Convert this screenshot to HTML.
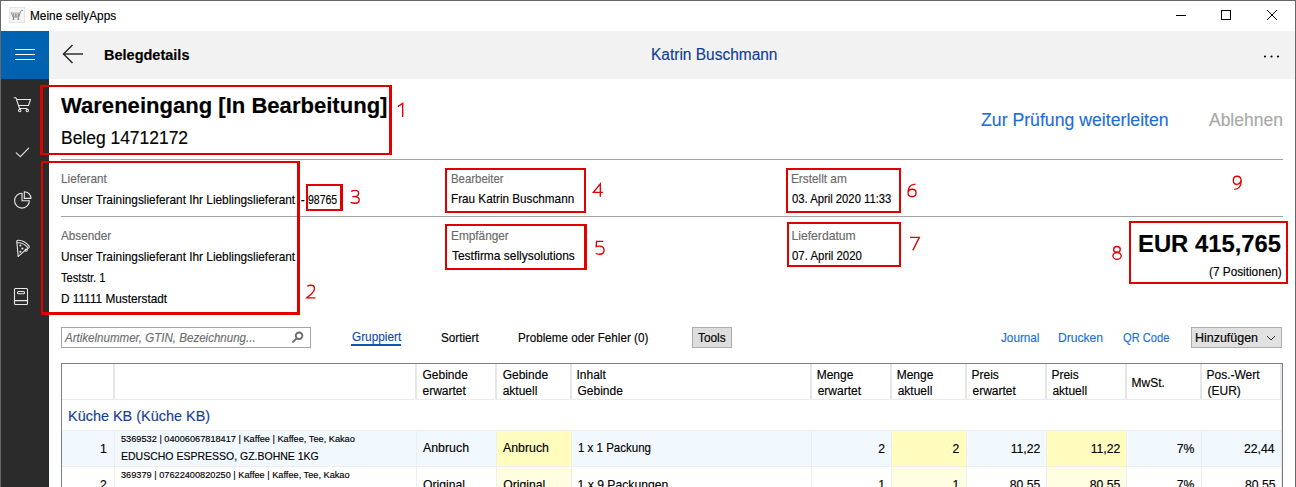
<!DOCTYPE html>
<html><head><meta charset="utf-8"><title>Belegdetails</title>
<style>
html,body{margin:0;padding:0;width:1296px;height:487px;overflow:hidden;background:#fff}
.a{position:absolute;box-sizing:border-box}
.t{position:absolute;white-space:nowrap;-webkit-text-stroke:0.15px currentColor}
</style></head><body>
<div class="a" style="left:0px;top:0px;width:1296px;height:487px;background:#ffffff;"></div><div class="a" style="left:1px;top:31px;width:48px;height:456px;background:#2b2b2b;"></div><div class="a" style="left:1px;top:31px;width:48px;height:48px;background:#0063b1;"></div><div class="a" style="left:15px;top:49px;width:20px;height:1px;background:#ffffff;"></div><div class="a" style="left:15px;top:54px;width:20px;height:1px;background:#ffffff;"></div><div class="a" style="left:15px;top:59px;width:20px;height:1px;background:#ffffff;"></div><div class="a" style="left:49px;top:31px;width:1246px;height:48px;background:#f2f2f2;"></div><div class="a" style="left:0px;top:0px;width:1296px;height:1px;background:#686868;"></div><div class="a" style="left:0px;top:0px;width:1px;height:487px;background:#686868;"></div><div class="a" style="left:1295px;top:0px;width:1px;height:487px;background:#686868;"></div><div class="a" style="left:61px;top:159px;width:1222px;height:1px;background:#a3a3a3;"></div><div class="a" style="left:61px;top:216px;width:1222px;height:1px;background:#a3a3a3;"></div><div class="a" style="left:61px;top:327px;width:250px;height:21px;box-shadow:inset 0 0 0 1px #a3a5aa;"></div><div class="a" style="left:351px;top:344px;width:50px;height:2px;background:#0a5ab4;"></div><div class="a" style="left:692px;top:327px;width:40px;height:21px;background:#dddddd;box-shadow:inset 0 0 0 1px #adadad;"></div><div class="a" style="left:1191px;top:327px;width:91px;height:21px;background:#e1e1e1;box-shadow:inset 0 0 0 1px #adadad;"></div><div class="a" style="left:61px;top:363px;width:1222px;height:1px;background:#7a7f87;"></div><div class="a" style="left:61px;top:363px;width:1px;height:124px;background:#7a7f87;"></div><div class="a" style="left:1282px;top:363px;width:1px;height:124px;background:#7a7f87;"></div><div class="a" style="left:62px;top:399px;width:1220px;height:1px;background:#ebebeb;"></div><div class="a" style="left:113px;top:364px;width:2px;height:35px;background:#e6e6e6;"></div><div class="a" style="left:415px;top:364px;width:2px;height:35px;background:#e6e6e6;"></div><div class="a" style="left:495px;top:364px;width:2px;height:35px;background:#e6e6e6;"></div><div class="a" style="left:570px;top:364px;width:2px;height:35px;background:#e6e6e6;"></div><div class="a" style="left:810px;top:364px;width:2px;height:35px;background:#e6e6e6;"></div><div class="a" style="left:890px;top:364px;width:2px;height:35px;background:#e6e6e6;"></div><div class="a" style="left:965px;top:364px;width:2px;height:35px;background:#e6e6e6;"></div><div class="a" style="left:1045px;top:364px;width:2px;height:35px;background:#e6e6e6;"></div><div class="a" style="left:1125px;top:364px;width:2px;height:35px;background:#e6e6e6;"></div><div class="a" style="left:1200px;top:364px;width:2px;height:35px;background:#e6e6e6;"></div><div class="a" style="left:1280px;top:364px;width:2px;height:35px;background:#e6e6e6;"></div><div class="a" style="left:62px;top:430px;width:1220px;height:1px;background:#eeeeee;"></div><div class="a" style="left:62px;top:431px;width:1220px;height:35px;background:#f2f9fe;"></div><div class="a" style="left:62px;top:466px;width:1220px;height:1px;background:#eeeeee;"></div><div class="a" style="left:497px;top:431px;width:74px;height:35px;background:#fffcbe;"></div><div class="a" style="left:497px;top:467px;width:74px;height:20px;background:#fffde1;"></div><div class="a" style="left:892px;top:431px;width:74px;height:35px;background:#fffcbe;"></div><div class="a" style="left:892px;top:467px;width:74px;height:20px;background:#fffde1;"></div><div class="a" style="left:1047px;top:431px;width:79px;height:35px;background:#fffcbe;"></div><div class="a" style="left:1047px;top:467px;width:79px;height:20px;background:#fffde1;"></div><div class="a" style="left:114px;top:430px;width:1px;height:57px;background:#eeeeee;"></div><div class="a" style="left:416px;top:430px;width:1px;height:57px;background:#eeeeee;"></div><div class="a" style="left:496px;top:430px;width:1px;height:57px;background:#eeeeee;"></div><div class="a" style="left:571px;top:430px;width:1px;height:57px;background:#eeeeee;"></div><div class="a" style="left:811px;top:430px;width:1px;height:57px;background:#eeeeee;"></div><div class="a" style="left:891px;top:430px;width:1px;height:57px;background:#eeeeee;"></div><div class="a" style="left:966px;top:430px;width:1px;height:57px;background:#eeeeee;"></div><div class="a" style="left:1046px;top:430px;width:1px;height:57px;background:#eeeeee;"></div><div class="a" style="left:1126px;top:430px;width:1px;height:57px;background:#eeeeee;"></div><div class="a" style="left:1201px;top:430px;width:1px;height:57px;background:#eeeeee;"></div><div class="a" style="left:1281px;top:364px;width:1px;height:123px;background:#e6e6e6;"></div><div class="a" style="left:40px;top:85px;width:352px;height:70px;border-style:solid;border-color:#e00000;border-width:2px 3px 2px 3px"></div><div class="a" style="left:41px;top:161px;width:259px;height:154px;border-style:solid;border-color:#e00000;border-width:2px 3px 3px 2px"></div><div class="a" style="left:306px;top:184px;width:37px;height:27px;border-style:solid;border-color:#e00000;border-width:2px 3px 2px 2px"></div><div class="a" style="left:445px;top:168px;width:141px;height:45px;border-style:solid;border-color:#e00000;border-width:2px 2px 2px 2px"></div><div class="a" style="left:786px;top:168px;width:115px;height:45px;border-style:solid;border-color:#e00000;border-width:2px 2px 2px 2px"></div><div class="a" style="left:445px;top:224px;width:142px;height:46px;border-style:solid;border-color:#e00000;border-width:2px 3px 2px 2px"></div><div class="a" style="left:787px;top:222px;width:114px;height:45px;border-style:solid;border-color:#e00000;border-width:2px 2px 2px 2px"></div><div class="a" style="left:1129px;top:221px;width:159px;height:63px;border-style:solid;border-color:#e00000;border-width:2px 2px 2px 2px"></div><div class="t" style="left:29.55px;top:10.22px;font:normal normal 12.5px/12.5px 'Liberation Sans', sans-serif;color:#000;transform:scaleX(0.9467);transform-origin:0 0;">Meine sellyApps</div><div class="t" style="left:103.62px;top:47.57px;font:normal bold 14.8px/14.8px 'Liberation Sans', sans-serif;color:#000;transform:scaleX(0.9802);transform-origin:0 0;">Belegdetails</div><div class="t" style="left:650.83px;top:46.56px;font:normal normal 16px/16px 'Liberation Sans', sans-serif;color:#0f3d96;transform:scaleX(0.9674);transform-origin:0 0;">Katrin Buschmann</div><div class="t" style="left:61.4px;top:96.1px;font:normal bold 21.5px/21.5px 'Liberation Sans', sans-serif;color:#000;transform:scaleX(1.0262);transform-origin:0 0;">Wareneingang [In Bearbeitung]</div><div class="t" style="left:61.3px;top:129.99px;font:normal normal 17.5px/17.5px 'Liberation Sans', sans-serif;color:#000;transform:scaleX(0.9968);transform-origin:0 0;">Beleg 14712172</div><div class="t" style="left:980.6px;top:112.1px;font:normal normal 17.6px/17.6px 'Liberation Sans', sans-serif;color:#1c6fd4;transform:scaleX(1.0048);transform-origin:0 0;">Zur Prüfung weiterleiten</div><div class="t" style="left:1208.5px;top:112.1px;font:normal normal 17.6px/17.6px 'Liberation Sans', sans-serif;color:#a8a8a8;transform:scaleX(0.9932);transform-origin:0 0;">Ablehnen</div><div class="t" style="left:60.53px;top:172.57px;font:normal normal 12.2px/12.2px 'Liberation Sans', sans-serif;color:#6a6a6a;transform:scaleX(0.966);transform-origin:0 0;">Lieferant</div><div class="t" style="left:60.53px;top:194.07px;font:normal normal 12.2px/12.2px 'Liberation Sans', sans-serif;color:#000;transform:scaleX(0.9708);transform-origin:0 0;">Unser Trainingslieferant Ihr Lieblingslieferant</div><div class="t" style="left:300.8px;top:194.07px;font:normal normal 12.2px/12.2px 'Liberation Sans', sans-serif;color:#000;">-</div><div class="t" style="left:308.4px;top:194.07px;font:normal normal 12.2px/12.2px 'Liberation Sans', sans-serif;color:#000;transform:scaleX(0.8588);transform-origin:0 0;">98765</div><div class="t" style="left:61.3px;top:229.77px;font:normal normal 12.2px/12.2px 'Liberation Sans', sans-serif;color:#6a6a6a;transform:scaleX(0.9596);transform-origin:0 0;">Absender</div><div class="t" style="left:60.53px;top:250.67px;font:normal normal 12.2px/12.2px 'Liberation Sans', sans-serif;color:#000;transform:scaleX(0.9708);transform-origin:0 0;">Unser Trainingslieferant Ihr Lieblingslieferant</div><div class="t" style="left:61.3px;top:271.67px;font:normal normal 12.2px/12.2px 'Liberation Sans', sans-serif;color:#000;transform:scaleX(0.9122);transform-origin:0 0;">Teststr. 1</div><div class="t" style="left:60.93px;top:293.27px;font:normal normal 12.2px/12.2px 'Liberation Sans', sans-serif;color:#000;transform:scaleX(0.9688);transform-origin:0 0;">D 11111 Musterstadt</div><div class="t" style="left:451.47px;top:172.77px;font:normal normal 12.2px/12.2px 'Liberation Sans', sans-serif;color:#6a6a6a;transform:scaleX(0.9348);transform-origin:0 0;">Bearbeiter</div><div class="t" style="left:451.44px;top:193.17px;font:normal normal 12.2px/12.2px 'Liberation Sans', sans-serif;color:#000;transform:scaleX(0.9622);transform-origin:0 0;">Frau Katrin Buschmann</div><div class="t" style="left:791.43px;top:172.77px;font:normal normal 12.2px/12.2px 'Liberation Sans', sans-serif;color:#6a6a6a;transform:scaleX(0.9679);transform-origin:0 0;">Erstellt am</div><div class="t" style="left:792.4px;top:193.17px;font:normal normal 12.2px/12.2px 'Liberation Sans', sans-serif;color:#000;transform:scaleX(0.9243);transform-origin:0 0;">03. April 2020 11:33</div><div class="t" style="left:451.43px;top:229.67px;font:normal normal 12.2px/12.2px 'Liberation Sans', sans-serif;color:#6a6a6a;transform:scaleX(0.9695);transform-origin:0 0;">Empfänger</div><div class="t" style="left:452.4px;top:250.27px;font:normal normal 12.2px/12.2px 'Liberation Sans', sans-serif;color:#000;transform:scaleX(0.98);transform-origin:0 0;">Testfirma sellysolutions</div><div class="t" style="left:791.4px;top:229.67px;font:normal normal 12.2px/12.2px 'Liberation Sans', sans-serif;color:#6a6a6a;">Lieferdatum</div><div class="t" style="left:792.4px;top:250.27px;font:normal normal 12.2px/12.2px 'Liberation Sans', sans-serif;color:#000;transform:scaleX(0.9378);transform-origin:0 0;">07. April 2020</div><div class="t" style="left:1137.96px;top:232.73px;font:normal bold 23px/23px 'Liberation Sans', sans-serif;color:#000;transform:scaleX(1.0358);transform-origin:0 0;">EUR 415,765</div><div class="t" style="left:1209.0px;top:266.37px;font:normal normal 12.2px/12.2px 'Liberation Sans', sans-serif;color:#000;transform:scaleX(0.968);transform-origin:0 0;">(7 Positionen)</div><div class="t" style="left:64.96px;top:331.84px;font:italic normal 12px/12px 'Liberation Sans', sans-serif;color:#6d6d6d;transform:scaleX(0.9626);transform-origin:0 0;">Artikelnummer, GTIN, Bezeichnung...</div><div class="t" style="left:351.5px;top:331.17px;font:normal normal 12.2px/12.2px 'Liberation Sans', sans-serif;color:#0f4fa8;transform:scaleX(0.9686);transform-origin:0 0;">Gruppiert</div><div class="t" style="left:440.54px;top:331.67px;font:normal normal 12.2px/12.2px 'Liberation Sans', sans-serif;color:#000;transform:scaleX(0.9615);transform-origin:0 0;">Sortiert</div><div class="t" style="left:518.04px;top:331.67px;font:normal normal 12.2px/12.2px 'Liberation Sans', sans-serif;color:#000;transform:scaleX(0.957);transform-origin:0 0;">Probleme oder Fehler (0)</div><div class="t" style="left:697.5px;top:331.67px;font:normal normal 12.2px/12.2px 'Liberation Sans', sans-serif;color:#000;transform:scaleX(0.9714);transform-origin:0 0;">Tools</div><div class="t" style="left:1000.6px;top:331.67px;font:normal normal 12.2px/12.2px 'Liberation Sans', sans-serif;color:#1c6fd4;transform:scaleX(0.9625);transform-origin:0 0;">Journal</div><div class="t" style="left:1058.21px;top:331.67px;font:normal normal 12.2px/12.2px 'Liberation Sans', sans-serif;color:#1c6fd4;transform:scaleX(0.9932);transform-origin:0 0;">Drucken</div><div class="t" style="left:1123.4px;top:331.67px;font:normal normal 12.2px/12.2px 'Liberation Sans', sans-serif;color:#1c6fd4;transform:scaleX(0.9118);transform-origin:0 0;">QR Code</div><div class="t" style="left:1195.18px;top:331.67px;font:normal normal 12.2px/12.2px 'Liberation Sans', sans-serif;color:#000;transform:scaleX(1.0217);transform-origin:0 0;">Hinzufügen</div><div class="t" style="left:422.5px;top:368.84px;font:normal normal 12.0px/12.0px 'Liberation Sans', sans-serif;color:#000;">Gebinde</div><div class="t" style="left:422.5px;top:384.84px;font:normal normal 12.0px/12.0px 'Liberation Sans', sans-serif;color:#000;">erwartet</div><div class="t" style="left:502.7px;top:368.84px;font:normal normal 12.0px/12.0px 'Liberation Sans', sans-serif;color:#000;">Gebinde</div><div class="t" style="left:502.7px;top:384.84px;font:normal normal 12.0px/12.0px 'Liberation Sans', sans-serif;color:#000;">aktuell</div><div class="t" style="left:576.5px;top:368.84px;font:normal normal 12.0px/12.0px 'Liberation Sans', sans-serif;color:#000;">Inhalt</div><div class="t" style="left:577.5px;top:384.84px;font:normal normal 12.0px/12.0px 'Liberation Sans', sans-serif;color:#000;">Gebinde</div><div class="t" style="left:816.7px;top:368.84px;font:normal normal 12.0px/12.0px 'Liberation Sans', sans-serif;color:#000;">Menge</div><div class="t" style="left:817.7px;top:384.84px;font:normal normal 12.0px/12.0px 'Liberation Sans', sans-serif;color:#000;">erwartet</div><div class="t" style="left:896.7px;top:368.84px;font:normal normal 12.0px/12.0px 'Liberation Sans', sans-serif;color:#000;">Menge</div><div class="t" style="left:897.7px;top:384.84px;font:normal normal 12.0px/12.0px 'Liberation Sans', sans-serif;color:#000;">aktuell</div><div class="t" style="left:971.5px;top:368.84px;font:normal normal 12.0px/12.0px 'Liberation Sans', sans-serif;color:#000;">Preis</div><div class="t" style="left:972.5px;top:384.84px;font:normal normal 12.0px/12.0px 'Liberation Sans', sans-serif;color:#000;">erwartet</div><div class="t" style="left:1051.4px;top:368.84px;font:normal normal 12.0px/12.0px 'Liberation Sans', sans-serif;color:#000;">Preis</div><div class="t" style="left:1052.4px;top:384.84px;font:normal normal 12.0px/12.0px 'Liberation Sans', sans-serif;color:#000;">aktuell</div><div class="t" style="left:1206.5px;top:368.84px;font:normal normal 12.0px/12.0px 'Liberation Sans', sans-serif;color:#000;">Pos.-Wert</div><div class="t" style="left:1207.5px;top:384.84px;font:normal normal 12.0px/12.0px 'Liberation Sans', sans-serif;color:#000;">(EUR)</div><div class="t" style="left:1131.5px;top:376.54px;font:normal normal 12.0px/12.0px 'Liberation Sans', sans-serif;color:#000;">MwSt.</div><div class="t" style="left:67.84px;top:408.1px;font:normal normal 15px/15px 'Liberation Sans', sans-serif;color:#163f93;transform:scaleX(0.963);transform-origin:0 0;">Küche KB (Küche KB)</div><div class="t" style="left:100.0px;top:442.87px;font:normal normal 12.2px/12.2px 'Liberation Sans', sans-serif;color:#000;">1</div><div class="t" style="left:121.2px;top:434.73px;font:normal normal 9.3px/9.3px 'Liberation Sans', sans-serif;color:#000;transform:scaleX(0.9898);transform-origin:0 0;">5369532 | 04006067818417 | Kaffee | Kaffee, Tee, Kakao</div><div class="t" style="left:120.91px;top:450.71px;font:normal normal 11.8px/11.8px 'Liberation Sans', sans-serif;color:#000;transform:scaleX(0.89);transform-origin:0 0;">EDUSCHO ESPRESSO, GZ.BOHNE 1KG</div><div class="t" style="left:423.0px;top:442.47px;font:normal normal 12.2px/12.2px 'Liberation Sans', sans-serif;color:#000;transform:scaleX(1.0133);transform-origin:0 0;">Anbruch</div><div class="t" style="left:503.3px;top:442.47px;font:normal normal 12.2px/12.2px 'Liberation Sans', sans-serif;color:#000;transform:scaleX(1.0111);transform-origin:0 0;">Anbruch</div><div class="t" style="left:577.56px;top:442.47px;font:normal normal 12.2px/12.2px 'Liberation Sans', sans-serif;color:#000;transform:scaleX(0.9447);transform-origin:0 0;">1 x 1 Packung</div><div class="t" style="left:878.2px;top:442.87px;font:normal normal 12.2px/12.2px 'Liberation Sans', sans-serif;color:#000;">2</div><div class="t" style="left:952.4px;top:442.87px;font:normal normal 12.2px/12.2px 'Liberation Sans', sans-serif;color:#000;">2</div><div class="t" style="left:1010.7px;top:442.87px;font:normal normal 12.2px/12.2px 'Liberation Sans', sans-serif;color:#000;">11,22</div><div class="t" style="left:1090.7px;top:442.87px;font:normal normal 12.2px/12.2px 'Liberation Sans', sans-serif;color:#000;">11,22</div><div class="t" style="left:1176.8px;top:442.87px;font:normal normal 12.2px/12.2px 'Liberation Sans', sans-serif;color:#000;">7%</div><div class="t" style="left:1244.0px;top:442.87px;font:normal normal 12.2px/12.2px 'Liberation Sans', sans-serif;color:#000;">22,44</div><div class="t" style="left:100.0px;top:478.67px;font:normal normal 12.2px/12.2px 'Liberation Sans', sans-serif;color:#000;">2</div><div class="t" style="left:121.2px;top:470.83px;font:normal normal 9.3px/9.3px 'Liberation Sans', sans-serif;color:#000;transform:scaleX(0.9892);transform-origin:0 0;">369379 | 07622400820250 | Kaffee | Kaffee, Tee, Kakao</div><div class="t" style="left:120.2px;top:486.81px;font:normal normal 11.8px/11.8px 'Liberation Sans', sans-serif;color:#000;">EDUSCHO CAFFE CREMA BOHNE 1KG</div><div class="t" style="left:423.0px;top:478.67px;font:normal normal 12.2px/12.2px 'Liberation Sans', sans-serif;color:#000;">Original</div><div class="t" style="left:503.3px;top:478.67px;font:normal normal 12.2px/12.2px 'Liberation Sans', sans-serif;color:#000;">Original</div><div class="t" style="left:577.5px;top:478.67px;font:normal normal 12.2px/12.2px 'Liberation Sans', sans-serif;color:#000;">1 x 9 Packungen</div><div class="t" style="left:878.2px;top:478.67px;font:normal normal 12.2px/12.2px 'Liberation Sans', sans-serif;color:#000;">1</div><div class="t" style="left:952.4px;top:478.67px;font:normal normal 12.2px/12.2px 'Liberation Sans', sans-serif;color:#000;">1</div><div class="t" style="left:1009.7px;top:478.67px;font:normal normal 12.2px/12.2px 'Liberation Sans', sans-serif;color:#000;">80,55</div><div class="t" style="left:1089.7px;top:478.67px;font:normal normal 12.2px/12.2px 'Liberation Sans', sans-serif;color:#000;">80,55</div><div class="t" style="left:1176.8px;top:478.67px;font:normal normal 12.2px/12.2px 'Liberation Sans', sans-serif;color:#000;">7%</div><div class="t" style="left:1245.0px;top:478.67px;font:normal normal 12.2px/12.2px 'Liberation Sans', sans-serif;color:#000;">80,55</div>

<svg class="a" style="left:0;top:0" width="1296" height="487" viewBox="0 0 1296 487">
 <g fill="none" stroke="#000" stroke-width="1">
  <!-- minimize -->
  <line x1="1176" y1="15.5" x2="1186" y2="15.5"/>
  <rect x="1221.5" y="10.5" width="9" height="9"/>
  <line x1="1267" y1="10" x2="1277" y2="20"/>
  <line x1="1277" y1="10" x2="1267" y2="20"/>
 </g>
 <!-- back arrow -->
 <g fill="none" stroke="#222" stroke-width="1.4">
  <line x1="63.5" y1="54" x2="83" y2="54"/>
  <polyline points="72.5,45 63.5,54 72.5,63"/>
 </g>
 <!-- dots -->
 <g fill="#000"><circle cx="1265" cy="56.5" r="1.1"/><circle cx="1271.5" cy="56.5" r="1.1"/><circle cx="1278" cy="56.5" r="1.1"/></g>
 <!-- title icon -->
 <rect x="9.5" y="7.5" width="15" height="15" fill="#f4f4f4" stroke="#e6e6e6"/>
 <g fill="none" stroke="#8a8a8a" stroke-width="1">
  <path d="M11.3,12.3 L12.8,17 L18.8,17 L20.3,12.3"/>
  <path d="M13,12.5 L14,16.5 M15,12.5 L15.5,16.5 M17,12.5 L16.8,16.5 M19,12.5 L18.3,16.5"/>
  <path d="M20.3,12.3 L21.6,10.4 L23,10.4"/>
  <line x1="13.5" y1="17" x2="13.5" y2="19.5"/><line x1="18.3" y1="17" x2="18.3" y2="19.5"/>
  <line x1="12.5" y1="19.3" x2="14.5" y2="19.3"/><line x1="17.3" y1="19.3" x2="19.3" y2="19.3"/>
 </g>
 <!-- sidebar icons -->
 <g fill="none" stroke="#e8e8e8" stroke-width="1.1" stroke-linecap="round" stroke-linejoin="round">
  <polyline points="14.2,97.8 16,97.8 19.5,108.5 27,108.5"/>
  <polyline points="17,99.5 30.5,99.5 28.5,105.5 18.5,105.5"/>
  <circle cx="19.7" cy="110.5" r="1.2"/><circle cx="27.3" cy="110.5" r="1.2"/>
  <!-- check -->
  <polyline points="16.2,152.8 20.3,156.6 28.7,148.2"/>
  <!-- pie -->
  <path d="M22,193.3 A7.4,7.4 0 1 0 29.4,200.7 L22,200.7 Z"/>
  <path d="M24.3,191.8 A6.6,6.6 0 0 1 30.9,198.4 L24.3,198.4 Z"/>
  <!-- pizza -->
  <path d="M18.2,256.3 L16.8,241.8 Q16.7,240.4 18.1,240.3 Q24.5,240.1 29.1,246.1 Q29.6,247.4 28.2,248.4 L26.8,249.4"/>
  <path d="M17.4,242.8 Q23.2,242.4 27.6,247.4"/>
  <path d="M18.2,256.3 L25.2,250.3"/>
  <circle cx="26.1" cy="250.1" r="1.1"/>
  <circle cx="20.4" cy="245.5" r="0.5"/><circle cx="22.4" cy="248.6" r="0.5"/><circle cx="20.4" cy="251.8" r="0.5"/>
  <!-- book -->
  <rect x="14.5" y="288.5" width="13" height="16" rx="1"/>
  <line x1="14.5" y1="300.6" x2="27.5" y2="300.6"/>
  <rect x="17.5" y="291.5" width="7" height="2.2" rx="1"/>
 </g>
 <!-- magnifier -->
 <g fill="none" stroke="#6a6a6a" stroke-width="1.8">
  <circle cx="299.1" cy="335.8" r="3.3"/>
  <line x1="296.6" y1="338.4" x2="292.4" y2="342.5"/>
 </g>
 <!-- chevron -->
 <polyline points="1267,336 1271,340 1275,336" fill="none" stroke="#333" stroke-width="1"/>
 <g fill="none" stroke="#e00000" stroke-width="1.35" stroke-linecap="butt" stroke-linejoin="miter">
  <path d="M397.9,106.6 L402.7,103.3 L402.7,116.9"/>
  <path d="M351.2,191.4 C352.5,190.6 354,190.3 355.2,190.3 C357.3,190.3 358.6,191.6 358.6,193.3 C358.6,195.3 357,196.6 354.5,196.6 L352.3,196.6 M354.5,196.6 C357.5,196.6 359.2,198 359.2,200 C359.2,202.1 357.5,203.2 355,203.2 C353.3,203.2 351.6,202.9 350.6,202.4"/>
  <path d="M600.3,196.8 L600.3,183.8 L593.4,192.3 L602.9,192.3"/>
  <path d="M915.4,184.4 C913.5,184.2 911,184.6 909.6,186.6 C908.5,188.2 908,190.3 908,192.6 C908,195.2 909.7,196.7 912,196.7 C914.5,196.7 916.1,194.9 916.1,192.8 C916.1,190.6 914.6,189.2 912.3,189.2 C910.3,189.2 908.6,190.4 908,192"/>
  <path transform="translate(0,0.7)" d="M1241,180 C1240.2,182.3 1238.4,183.6 1236.6,183.6 C1234.6,183.6 1233.3,182 1233.3,179.6 C1233.3,177.2 1234.8,175.5 1237.2,175.5 C1239.8,175.5 1241.2,177.5 1241.2,180.5 C1241.2,185.3 1238.5,188.5 1234.2,188.6"/>
  <path d="M603.3,241.4 L596.5,241.4 L596.2,246.6 C597,246.2 598.2,246.1 599.2,246.1 C602.2,246.1 604.1,247.8 604.1,250.2 C604.1,252.7 602,254.2 599.3,254.2 C597.9,254.2 596.6,254 595.7,253.5"/>
  <path d="M910.1,237.4 L919.3,237.4 L912.8,250.4"/>
  <ellipse cx="1116.95" cy="249.4" rx="3.3" ry="2.85"/>
  <ellipse cx="1117.05" cy="255.9" rx="4.1" ry="3.45"/>
  <path d="M307.2,286.3 C308.2,285.6 309.5,285.2 310.9,285.2 C313.1,285.2 314.5,286.6 314.5,288.6 C314.5,290.4 313.6,291.7 311.8,293.5 L306.8,297.9 L315.4,297.9"/>
 </g>
</svg>

</body></html>
